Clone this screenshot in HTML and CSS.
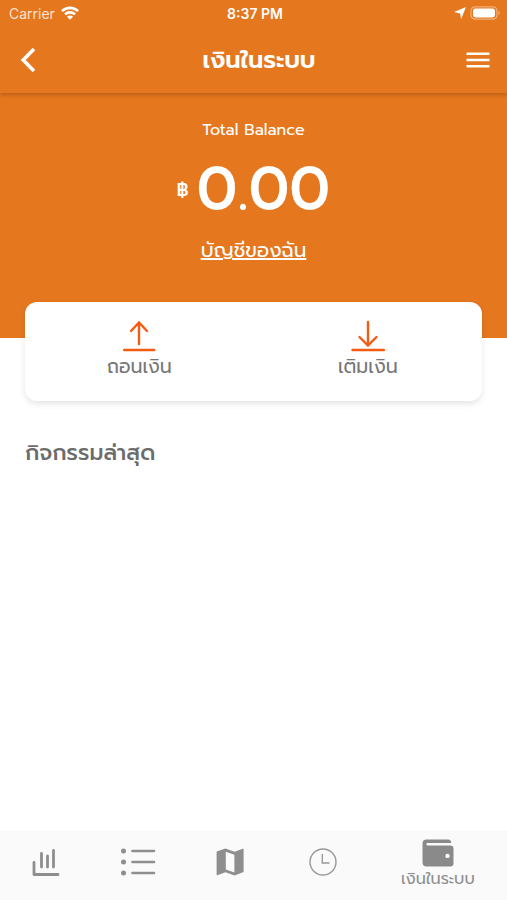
FILE: index.html
```html
<!DOCTYPE html>
<html lang="th">
  <head>
    <meta charset="UTF-8" />
    <meta name="viewport" content="width=device-width, initial-scale=1.0" />
    <title>เงินในระบบ</title>
    <link rel="stylesheet" href="styles.css">
  </head>
  <body>
    <header class="top">
      <div class="status-bar">
        <div class="status-side">
          <span class="carrier">Carrier</span>
          <svg width="18" height="14" viewBox="0 0 18 14" fill="none" stroke="#fff" stroke-width="2.6">
            <path d="M1 5.2C5.4 .8 12.600 .8 17 5.200" />
            <path d="M4 8.400c2.800-2.700 7.200-2.700 10 0" />
            <path d="M9 13.800L5.900 10.700c1.700-1.500 4.500-1.500 6.200 0z" fill="#fff" stroke="none" />
          </svg>
        </div>
        <span class="clock">8:37 PM</span>
        <div class="status-side status-right">
          <svg width="12" height="12" viewBox="0 0 12 12" fill="#fff">
            <path d="M12 0L7.200 12L6 6.400L0 5z" />
          </svg>
          <svg width="31" height="14" viewBox="0 0 31 14">
            <rect x="1" y=".8" width="26" height="12.400" rx="4" fill="none" stroke="#f0b07c" stroke-width="1.200" />
            <rect x="3" y="2.600" width="22" height="8.800" rx="2.400" fill="#fff" />
            <path d="M28.500 5v4c1.800-.6 1.800-3.400 0-4z" fill="#f0b07c" />
          </svg>
        </div>
      </div>
      <div class="title-bar">
        <button type="button" class="back-btn" aria-label="Back">
          <svg width="16" height="26" viewBox="0 0 16 26" fill="none" stroke="#fff" stroke-width="3.600">
            <path d="M14 2L3.200 13L14 24" />
          </svg>
        </button>
        <h1>เงินในระบบ</h1>
        <button type="button" class="menu-btn" aria-label="Menu">
          <svg width="24" height="16" viewBox="0 0 24 16" fill="#fff">
            <path d="M.5 .5h23v2.600H.5zM.5 6.700h23v2.600H.5zM.5 12.900h23v2.600H.5z" />
          </svg>
        </button>
      </div>
    </header>

    <main>
      <section class="balance">
        <p class="balance-label">Total Balance</p>
        <p class="amount"><span class="currency">฿</span>0.00</p>
        <a class="account-link" href="#account">บัญชีของฉัน</a>
      </section>

      <section class="actions">
        <button type="button" class="action">
          <svg width="34" height="32" viewBox="0 0 34 32" fill="none" stroke="#f35b12" stroke-width="2.400" stroke-linecap="round">
            <path d="M17 24V3M9 11l8-8.500L25 11" />
            <path d="M2.200 30h30" />
          </svg>
          <span>ถอนเงิน</span>
        </button>
        <button type="button" class="action">
          <svg width="34" height="32" viewBox="0 0 34 32" fill="none" stroke="#f35b12" stroke-width="2.400" stroke-linecap="round">
            <path d="M17 2v23M8.500 17l8.500 8.500L25.500 17" />
            <path d="M1.500 30h31.500" />
          </svg>
          <span>เติมเงิน</span>
        </button>
      </section>

      <section class="activity">
        <h2>กิจกรรมล่าสุด</h2>
      </section>
    </main>

    <nav class="tabs">
      <a href="#stats" class="tab" aria-label="Statistics">
        <svg width="28" height="28" viewBox="0 0 28 28" fill="none" stroke="#8e8e8e" stroke-width="2.800" stroke-linecap="round" stroke-linejoin="round">
          <path d="M2 14.500V26.500H26" />
          <path d="M9.500 5.500V19M15.500 8V19M21.500 2.500V19" />
        </svg>
      </a>
      <a href="#list" class="tab" aria-label="List">
        <svg width="36" height="28" viewBox="0 0 36 28" fill="#8e8e8e" stroke="#8e8e8e" stroke-linecap="round">
          <path d="M12.500 3H34M12.500 14H34M12.500 25H34" stroke-width="2.600" />
          <circle cx="3.500" cy="3" r="2.500" stroke="none" />
          <circle cx="3.500" cy="14" r="2.500" stroke="none" />
          <circle cx="3.500" cy="25" r="2.500" stroke="none" />
        </svg>
      </a>
      <a href="#map" class="tab" aria-label="Map">
        <svg width="28" height="28" viewBox="0 0 28 28" fill="#8e8e8e" fill-rule="evenodd">
          <path d="M.6 3.600L9.400 .6L18.600 3.800L26.600 .8C27.200 .6 27.600 .8 27.600 1.400V24L18.600 27.400L9.400 24.200L1.400 27.200C.8 27.400 .6 27.200 .6 26.600zM9.800 3.800V21.400L18.400 24.400V6.800z" />
        </svg>
      </a>
      <a href="#history" class="tab" aria-label="History">
        <svg width="28" height="28" viewBox="0 0 28 28" fill="none" stroke="#999" stroke-width="1.400">
          <circle cx="14" cy="14" r="13" />
          <path d="M13.300 6V15H20.500" />
        </svg>
      </a>
      <a href="#wallet" class="tab tab-active">
        <svg width="32" height="28" viewBox="0 0 32 28" fill="#8a8a8a" fill-rule="evenodd">
          <path d="M4.500 .5H26C28 .5 29.300 1.800 29.300 4H5.500C4 4 4 6.400 5.500 6.400H28.500C30.400 6.400 31.500 7.500 31.500 9.400V24.500C31.500 26.500 30.400 27.500 28.500 27.500H4.500C2 27.500 .5 26 .5 23.500V4.500C.5 2 2 .5 4.500 .5zM25.500 14.700a2.200 2.200 0 1 0 0 4.400a2.200 2.200 0 1 0 0-4.400z" />
        </svg>
        <span>เงินในระบบ</span>
      </a>
    </nav>
  </body>
</html>
```

FILE: styles.css
```css
* {
  box-sizing: border-box;
}

body {
  margin: 0;
  min-height: 100vh;
  display: flex;
  flex-direction: column;
  background-color: #fff;
  color: #6c6c6c;
  font-family: Prompt, Inter, "Noto Sans Thai", "Noto Sans", sans-serif;
}

h1,
h2,
p {
  margin: 0;
}

button {
  padding: 0;
  border: none;
  background: none;
  color: inherit;
  font-family: inherit;
  cursor: pointer;
}

svg {
  display: block;
}

/* Header */
.top {
  position: relative;
  background-color: #e5771e;
  color: #fff;
  box-shadow: 0 2px 4px rgba(0, 0, 0, 0.2);
}

.status-bar {
  display: flex;
  align-items: center;
  height: 26px;
  padding: 0 6px 0 9px;
  font-family: Inter, sans-serif;
  font-size: 14px;
}

.status-side {
  flex: 1;
  display: flex;
  align-items: center;
  gap: 6px;
}

.status-right {
  justify-content: flex-end;
  gap: 4px;
}

.carrier {
  color: #fbe3d0;
}

.clock {
  font-weight: 600;
}

.title-bar {
  display: flex;
  align-items: center;
  justify-content: space-between;
  height: 67px;
  padding: 0 17px 0 20px;
}

.title-bar h1 {
  font-size: 24px;
  line-height: 32px;
  font-weight: 600;
}

.back-btn,
.menu-btn {
  width: 24px;
  height: 32px;
}

.back-btn {
  width: 32px;
}

/* Balance */
.balance {
  display: flex;
  flex-direction: column;
  align-items: center;
  height: 245px;
  padding-top: 25px;
  background-color: #e5771e;
  color: #fff;
}

.balance-label {
  font-size: 16px;
  line-height: 24px;
}

.amount {
  display: flex;
  align-items: center;
  gap: 8px;
  margin-top: 10px;
  font-size: 60px;
  line-height: 76px;
  font-weight: 500;
}

.currency {
  font-size: 18px;
}

.account-link {
  margin-top: 6px;
  color: #fff;
  font-size: 20px;
  line-height: 32px;
}

/* Withdraw and top up */
.actions {
  position: relative;
  display: flex;
  margin: -36px 25px 0;
  border-radius: 12px;
  background-color: #fff;
  box-shadow: 0 3px 6px rgba(0, 0, 0, 0.1);
}

.action {
  flex: 1;
  display: flex;
  flex-direction: column;
  align-items: center;
  height: 99px;
  padding-top: 18px;
  color: #777;
  font-size: 19px;
  line-height: 30px;
}

.activity {
  padding: 36px 25px;
}

.activity h2 {
  font-size: 22px;
  line-height: 32px;
  font-weight: 500;
}

/* Bottom tabs */
.tabs {
  display: flex;
  height: 70px;
  margin-top: auto;
  background-color: #fafafa;
}

.tab {
  flex: 2;
  display: flex;
  flex-direction: column;
  align-items: center;
  justify-content: center;
  padding-bottom: 6px;
  color: #8e8e8e;
  font-size: 16px;
  line-height: 24px;
  text-decoration: none;
}

.tab-active {
  flex: 3;
  padding-bottom: 0;
}
```
